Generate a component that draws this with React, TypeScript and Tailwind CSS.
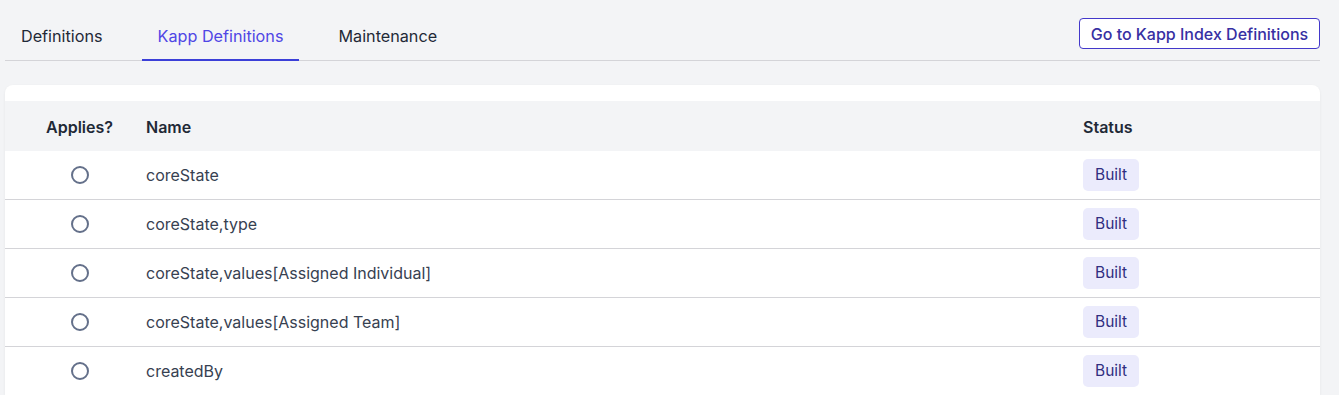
import React from "react";

const rows = [
  "coreState",
  "coreState,type",
  "coreState,values[Assigned Individual]",
  "coreState,values[Assigned Team]",
  "createdBy",
];

const tabs = ["Definitions", "Kapp Definitions", "Maintenance"];

export default function App() {
  return (
    <div
      className="min-h-screen bg-[#f3f4f6] pl-[5px] pr-[19px] text-[#374151]"
      style={{ fontFamily: "Inter, 'Noto Sans', sans-serif" }}
    >
      {/* tab bar */}
      <div className="flex items-center justify-between border-b border-[#d4d4d8] pt-[13px]">
        <div className="flex gap-[23px]">
          {tabs.map((t, i) => (
            <div
              key={t}
              className={
                i === 1
                  ? "-mb-px flex h-[48px] items-center border-b-2 border-[#3b3fd8] px-[16px] text-[16.2px] text-[#4f46e5]"
                  : "-mb-px flex h-[48px] items-center border-b-2 border-transparent px-[16px] text-[16.2px] text-[#1f2937]"
              }
            >
              {t}
            </div>
          ))}
        </div>
        <button className="mb-[6px] h-[31px] w-[241px] rounded-[4px] border border-[#4338ca] bg-white text-[16px] font-medium text-[#3730a3]">
          Go to Kapp Index Definitions
        </button>
      </div>

      {/* card */}
      <div className="mt-[24px] rounded-t-lg bg-white pt-4 shadow-[0_1px_3px_rgba(0,0,0,0.06)]">
        <div className="flex h-[50px] items-center bg-[#f3f4f6] pt-px text-[16px] font-semibold text-[#1f2937]">
          <div className="flex w-[141px] justify-center pl-[8px]">Applies?</div>
          <div className="flex-1">Name</div>
          <div className="w-[237px]">Status</div>
        </div>
        {rows.map((r, i) => (
          <div
            key={r}
            className={
              i === rows.length - 1
                ? "flex h-[48px] items-center text-[16px]"
                : "flex h-[49px] items-center border-b border-[#d4d4d8] text-[16px]"
            }
          >
            <div className="flex w-[141px] justify-center pl-[8px]">
              <span className="block h-[18px] w-[18px] rounded-full border-2 border-[#64708a]" />
            </div>
            <div className="flex-1 text-[#374151]">{r}</div>
            <div className="w-[237px]">
              <span className="inline-flex h-[32px] items-center rounded-[5px] bg-[#ebebfc] px-[12px] text-[15.5px] text-[#312e81]">
                Built
              </span>
            </div>
          </div>
        ))}
      </div>
    </div>
  );
}
